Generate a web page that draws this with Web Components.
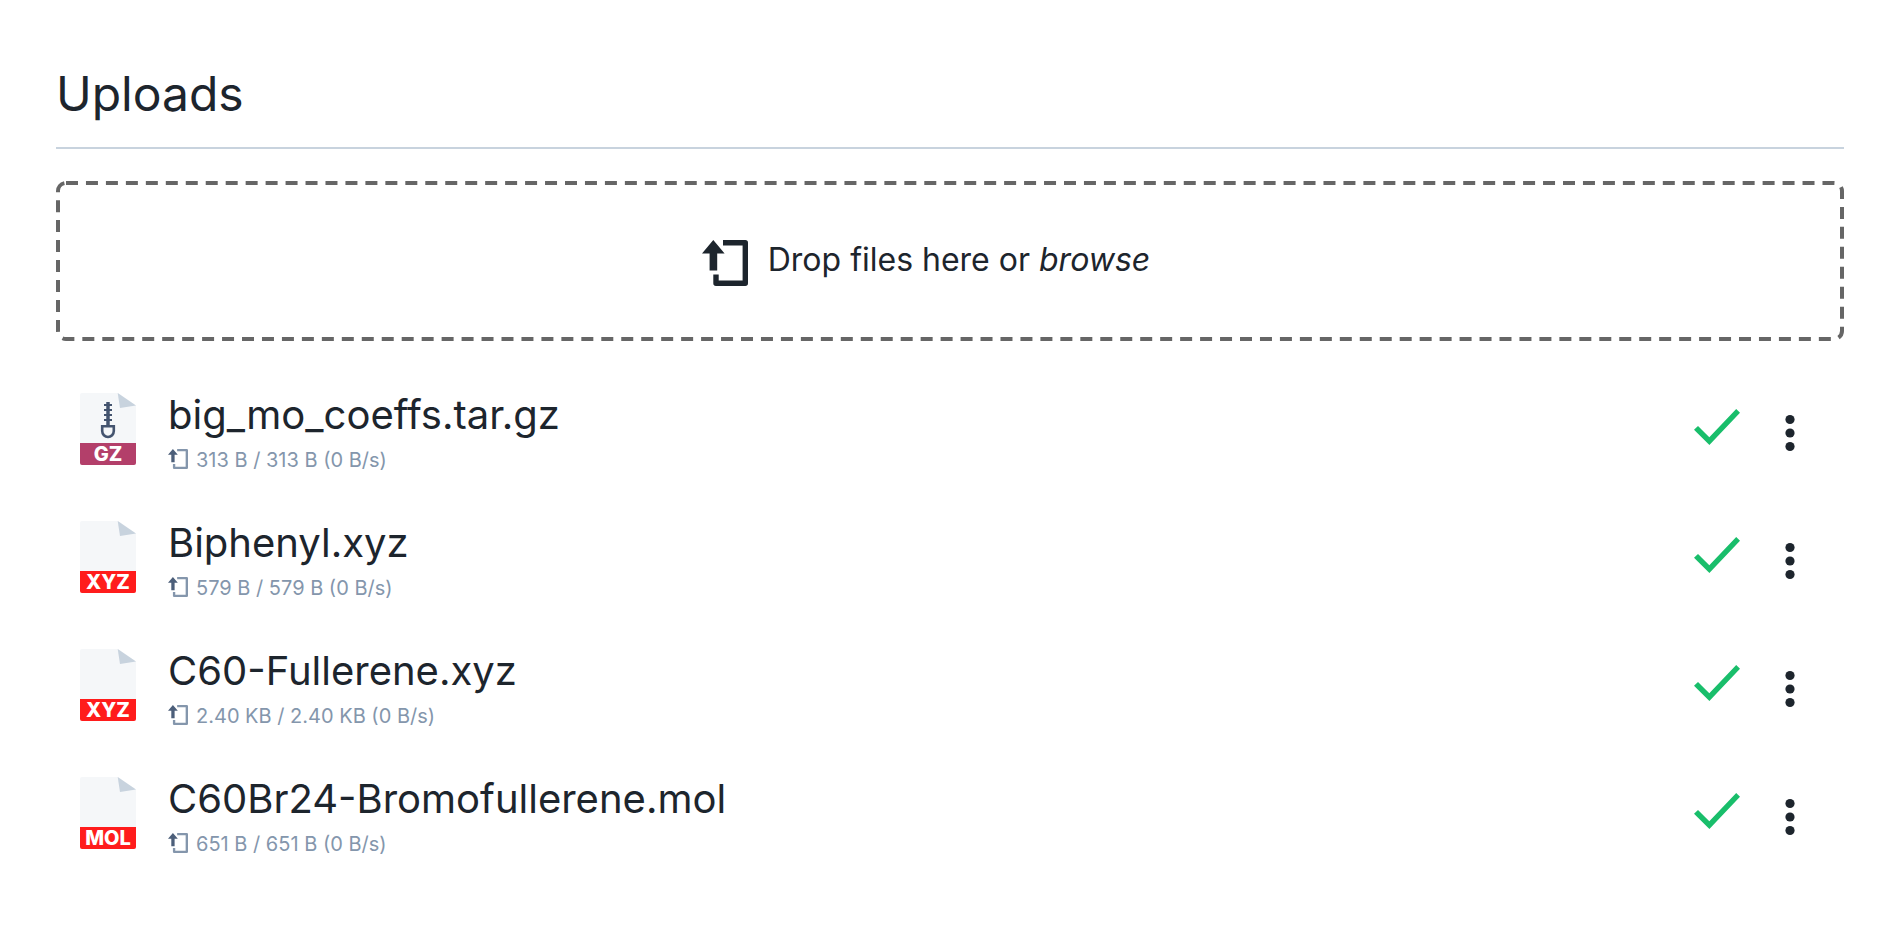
<!DOCTYPE html>
<html lang="en">
<head>
<meta charset="utf-8">
<title>Uploads</title>
<style>
  body { margin: 0; background: #fff; color: #1d252d; font-family: Inter, "Liberation Sans", sans-serif; }
</style>
</head>
<body>
<upload-panel>
  <span slot="title">Uploads</span>
  <drop-zone></drop-zone>
  <upload-list>
    <upload-item name="big_mo_coeffs.tar.gz" status="313 B / 313 B (0 B/s)" kind="GZ" archive></upload-item>
    <upload-item name="Biphenyl.xyz" status="579 B / 579 B (0 B/s)" kind="XYZ"></upload-item>
    <upload-item name="C60-Fullerene.xyz" status="2.40 KB / 2.40 KB (0 B/s)" kind="XYZ"></upload-item>
    <upload-item name="C60Br24-Bromofullerene.mol" status="651 B / 651 B (0 B/s)" kind="MOL"></upload-item>
  </upload-list>
</upload-panel>
<script>
class BaseElement extends HTMLElement {
  connectedCallback() {
    if (this.shadowRoot) return;
    this.attachShadow({ mode: "open" }).innerHTML = this.render();
  }
}

customElements.define("upload-panel", class extends BaseElement {
  render() {
    return `
      <style>
        :host { display: block; padding: 64px 60px 64px 56px; }
        h1 { margin: 0; padding-bottom: 23px; border-bottom: 2px solid #c8d3de;
             font-size: 48px; line-height: 60px; font-weight: 400; }
      </style>
      <h1><slot name="title"></slot></h1>
      <slot></slot>`;
  }
});

customElements.define("upload-icon", class extends BaseElement {
  render() {
    return `
      <style>
        :host { display: block; flex: none; width: 46px; height: 46px; }
        svg { display: block; width: 100%; height: 100%; }
        .arrow { fill: var(--arrow, currentColor); }
        .page { fill: none; stroke: currentColor; stroke-width: 5.4; stroke-linejoin: round; }
      </style>
      <svg viewBox="0 0 46 46" aria-hidden="true">
        <path class="arrow" d="M11.3 0 22.6 13.4H15.2V30.5H7.6V13.4H0Z"/>
        <path class="page" d="M21 2.7H43.3V43.3H14V34.5"/>
      </svg>`;
  }
});

customElements.define("drop-zone", class extends BaseElement {
  render() {
    return `
      <style>
        :host { position: relative; display: flex; align-items: center; justify-content: center;
                box-sizing: border-box; height: 160px; margin-top: 32px; padding-right: 48px;
                font-size: 32px; line-height: 40px; }
        .outline { position: absolute; inset: 0; width: 100%; height: 100%; pointer-events: none; }
        rect { width: calc(100% - 4px); height: calc(100% - 4px); fill: none;
               stroke: #666; stroke-width: 4; stroke-dasharray: 12 7.96; }
        upload-icon { margin: 4px 20px 0 0; }
        p { margin: 0 0 2px; }
        button { padding: 0; border: 0; background: none; color: inherit;
                 font: inherit; font-style: italic; cursor: pointer; }
      </style>
      <svg class="outline" aria-hidden="true"><rect x="2" y="2" rx="8"/></svg>
      <upload-icon></upload-icon>
      <p>Drop files here or <button type="button">browse</button></p>`;
  }
});

customElements.define("upload-list", class extends BaseElement {
  render() {
    return `
      <style>
        :host { display: flex; flex-direction: column; margin-top: 24px; }
      </style>
      <slot></slot>`;
  }
});

customElements.define("file-icon", class extends BaseElement {
  render() {
    const archive = this.hasAttribute("archive");
    return `
      <style>
        :host { display: flex; flex-direction: column; flex: none; width: 56px; height: 72px; }
        svg { display: block; width: 56px; height: 50px; }
        span { height: 22px; border-radius: 0 0 2px 2px; color: #fff; text-align: center;
               font-size: 20px; line-height: 23px; font-weight: 800;
               background: ${archive ? "#b33f6a" : "#ff1c1c"}; }
      </style>
      <svg viewBox="0 0 56 50" aria-hidden="true">
        <path fill="#f5f7f9" d="M2 0H38L56 12.5V50H0V2Q0 0 2 0Z"/>
        <path fill="#c8d3de" d="M37.7 0 56 12.5 40 15Z"/>
        ${archive ? `<g fill="none" stroke="#44546f" stroke-width="2">
          <path d="M28 9V33M24 12H32M24 17H32M24 22H32M24 27H32" stroke-width="2.2"/>
          <path d="M26.6 9V33M29.4 9V33" stroke-width="0.8"/>
          <path d="M22.2 33.2H33.8V38A5.8 6 0 0 1 22.2 38Z" stroke-width="2.6"/>
        </g>` : ""}
      </svg>
      <span>${this.getAttribute("kind")}</span>`;
  }
});

customElements.define("upload-item", class extends BaseElement {
  render() {
    const archive = this.hasAttribute("archive") ? "archive" : "";
    return `
      <style>
        :host { display: flex; align-items: center; height: 128px; padding: 0 30px 0 24px; }
        .text { flex: 1; min-width: 0; margin-left: 32px; padding-top: 4px; }
        .name { font-size: 40px; line-height: 50px; white-space: nowrap; }
        .status { display: flex; align-items: center; gap: 8px; margin-top: 8px;
                  color: #8496ac; font-size: 20px; line-height: 24px; }
        .status upload-icon { --arrow: #4c5f7a; width: 20px; height: 20px; margin-bottom: 2px; }
        .done { flex: none; width: 46px; height: 36px; margin-bottom: 4px; }
        button { flex: none; width: 48px; height: 48px; margin: 8px 0 0 26px; padding: 0;
                 border: 0; background: none; color: inherit; cursor: pointer; }
        button svg { display: block; width: 48px; height: 48px; }
      </style>
      <file-icon kind="${this.getAttribute("kind")}" ${archive}></file-icon>
      <div class="text">
        <div class="name">${this.getAttribute("name")}</div>
        <div class="status"><upload-icon></upload-icon><span>${this.getAttribute("status")}</span></div>
      </div>
      <svg class="done" viewBox="0 0 46 36" role="img" aria-label="Done">
        <path fill="#19be6b" d="M0 20.8 4 16.9 15.3 28.3 42.2 0 46 3.7 15.4 36Z"/>
      </svg>
      <button type="button" aria-label="More actions">
        <svg viewBox="0 0 48 48" fill="currentColor" aria-hidden="true">
          <circle cx="24" cy="10.5" r="4.6"/><circle cx="24" cy="24" r="4.6"/><circle cx="24" cy="37.5" r="4.6"/>
        </svg>
      </button>`;
  }
});
</script>
</body>
</html>
